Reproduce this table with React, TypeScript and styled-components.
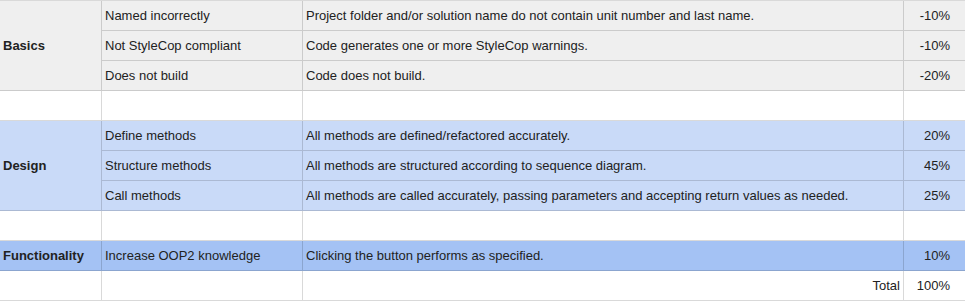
import { Fragment } from 'react'
import { createGlobalStyle, styled } from 'styled-components'

const GlobalStyle = createGlobalStyle`
  body {
    margin: 0;
    background: #ffffff;
    font-family: "Liberation Sans", Arial, sans-serif;
  }
`

type Tone = 'gray' | 'light' | 'blue' | 'none'

const tones: Record<Tone, string> = {
  gray: '#efefef',
  light: '#c9daf8',
  blue: '#a4c2f4',
  none: '#ffffff',
}

const Sheet = styled.div`
  width: 965px;
  display: grid;
  grid-template-columns: 102px 201px 601px 61px;
  grid-auto-rows: 30px;
  border-top: 1px solid rgba(0, 0, 0, 0.15);
  font-size: 13px;
  color: #222222;
`

const Cell = styled.div<{ $tone: Tone; $span?: number; $align?: string; $bold?: boolean; $last?: boolean }>`
  grid-row: ${(p) => (p.$span ? `span ${p.$span}` : 'auto')};
  display: flex;
  align-items: center;
  justify-content: ${(p) => p.$align || 'flex-start'};
  padding: ${(p) => (p.$align === 'flex-end' && p.$last ? '0 15px 0 3px' : '0 3px')};
  background: ${(p) => tones[p.$tone]};
  border-right: ${(p) => (p.$last ? 'none' : '1px solid rgba(0, 0, 0, 0.15)')};
  border-bottom: 1px solid rgba(0, 0, 0, 0.15);
  font-weight: ${(p) => (p.$bold ? 'bold' : 'normal')};
  white-space: nowrap;
  overflow: hidden;
`

type Criterion = { name: string; text: string; weight: string }
type Section = { title: string; tone: Tone; items: Criterion[] }

const sections: Section[] = [
  {
    title: 'Basics',
    tone: 'gray',
    items: [
      { name: 'Named incorrectly', text: 'Project folder and/or solution name do not contain unit number and last name.', weight: '-10%' },
      { name: 'Not StyleCop compliant', text: 'Code generates one or more StyleCop warnings.', weight: '-10%' },
      { name: 'Does not build', text: 'Code does not build.', weight: '-20%' },
    ],
  },
  {
    title: 'Design',
    tone: 'light',
    items: [
      { name: 'Define methods', text: 'All methods are defined/refactored accurately.', weight: '20%' },
      { name: 'Structure methods', text: 'All methods are structured according to sequence diagram.', weight: '45%' },
      { name: 'Call methods', text: 'All methods are called accurately, passing parameters and accepting return values as needed.', weight: '25%' },
    ],
  },
  {
    title: 'Functionality',
    tone: 'blue',
    items: [{ name: 'Increase OOP2 knowledge', text: 'Clicking the button performs as specified.', weight: '10%' }],
  },
]

// empty row between sections
function Spacer() {
  return (
    <>
      <Cell $tone="none" />
      <Cell $tone="none" />
      <Cell $tone="none" />
      <Cell $tone="none" $last />
    </>
  )
}

export default function App() {
  return (
    <>
      <GlobalStyle />
      <Sheet>
        {sections.map((s, si) => (
          <Fragment key={s.title}>
            {si > 0 && <Spacer />}
            <Cell $tone={s.tone} $span={s.items.length} $bold>
              {s.title}
            </Cell>
            {s.items.map((it) => (
              <Fragment key={it.name}>
                <Cell $tone={s.tone}>{it.name}</Cell>
                <Cell $tone={s.tone}>{it.text}</Cell>
                <Cell $tone={s.tone} $align="flex-end" $last>
                  {it.weight}
                </Cell>
              </Fragment>
            ))}
          </Fragment>
        ))}
        <Cell $tone="none" />
        <Cell $tone="none" />
        <Cell $tone="none" $align="flex-end">Total</Cell>
        <Cell $tone="none" $align="flex-end" $last>100%</Cell>
      </Sheet>
    </>
  )
}
